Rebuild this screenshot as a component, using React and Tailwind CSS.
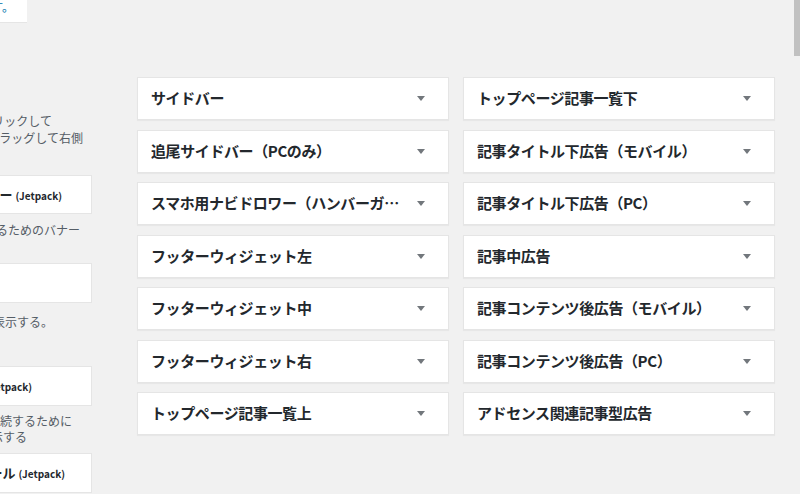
const leftAreas = [
  ['サイドバー', 'トップページ記事一覧下'],
  ['追尾サイドバー（PCのみ）', '記事タイトル下広告（モバイル）'],
  ['スマホ用ナビドロワー（ハンバーガーメニュー）', '記事タイトル下広告（PC）'],
  ['フッターウィジェット左', '記事中広告'],
  ['フッターウィジェット中', '記事コンテンツ後広告（モバイル）'],
  ['フッターウィジェット右', '記事コンテンツ後広告（PC）'],
  ['トップページ記事一覧上', 'アドセンス関連記事型広告'],
];

const font = { fontFamily: '"Noto Sans CJK JP", "Noto Sans", sans-serif' };

// 右寄せで左側がはみ出す1行
const Line = ({ pr, children, className = '' }) => (
  <div className={`flex justify-end overflow-hidden whitespace-nowrap ${className}`} style={{ paddingRight: pr }}>
    {children}
  </div>
);

const WidgetBox = ({ pr, title, h = 'h-[40px]' }) => (
  <div className={`${h} w-[92px] bg-white border-y border-r border-[#e5e5e5] flex items-center`}>
    {title && (
      <Line pr={pr} className="w-full items-baseline">
        <span className="text-[13px] font-bold text-[#23282d]">{title}</span>
        <span className="text-[10px] font-semibold text-[#23282d] ml-[3px]">(Jetpack)</span>
      </Line>
    )}
  </div>
);

const Area = ({ name }) => (
  <div className="h-[43px] bg-white border border-[#e5e5e5] shadow-[0_1px_1px_rgba(0,0,0,0.04)] flex items-center pl-[13px] pr-[23px]">
    <span className="flex-1 min-w-0 truncate text-[15px] font-bold tracking-[-0.4px] text-[#23282d] mr-[6px]">
      {name}
    </span>
    <span className="w-0 h-0 border-x-[4px] border-x-transparent border-t-[5px] border-t-[#72777c]" />
  </div>
);

const App = () => {
  return (
    <div className="w-[800px] h-[494px] bg-[#f1f1f1] flex overflow-hidden relative" style={font}>
      {/* 左側：利用できるウィジェット */}
      <div className="w-[92px] shrink-0 flex flex-col text-[12px] text-[#555d66]">
        <div className="w-[27px] h-[23px] bg-white border-b border-[#e5e5e5] overflow-hidden">
          <Line pr={13} className="leading-[14px] text-[12px] text-[#0073aa]">
            カスタマイザーで管理できます。
          </Line>
        </div>

        <div className="mt-[89px] leading-[17px]">
          <Line pr={40}>追加するには、ウィジェットをクリックして</Line>
          <Line pr={9}>無効化するには、ウィジェットをドラッグして右側</Line>
        </div>

        <div className="mt-[29px]">
          <WidgetBox pr={29} title="ブログ購読ボタンやバナー" h="h-[39px]" />
        </div>
        <Line pr={12} className="mt-[7px] leading-[17px]">ブログをフォローするためのバナー</Line>

        <div className="mt-[25px]">
          <WidgetBox />
        </div>
        <Line pr={39} className="mt-[10px] leading-[17px]">最新のフォロワーのアバターを表示する。</Line>

        <div className="mt-[36px]">
          <WidgetBox pr={59} title="Facebook ページプラグイン" />
        </div>
        <div className="mt-[7px] leading-[16px]">
          <Line pr={20}>Facebook ページに他の人が接続するために</Line>
          <Line pr={65}>バナーを表示する</Line>
        </div>

        <div className="mt-[8px]">
          <WidgetBox pr={26} title="ソーシャルメディアアイコンツール" />
        </div>
      </div>

      {/* 右側：ウィジェットエリア */}
      <div className="pl-[45px] pt-[77px]">
        <div className="grid grid-cols-[312px_312px] gap-x-[14px] gap-y-[9.5px]">
          {leftAreas.map(([a, b]) => [
            <Area key={a} name={a} />,
            <Area key={b} name={b} />,
          ])}
        </div>
      </div>

      {/* スクロールバー */}
      <div className="absolute right-0 top-0 w-[6px] h-[56px] bg-[#c1c1c1]" />
    </div>
  );
};

export default App;
